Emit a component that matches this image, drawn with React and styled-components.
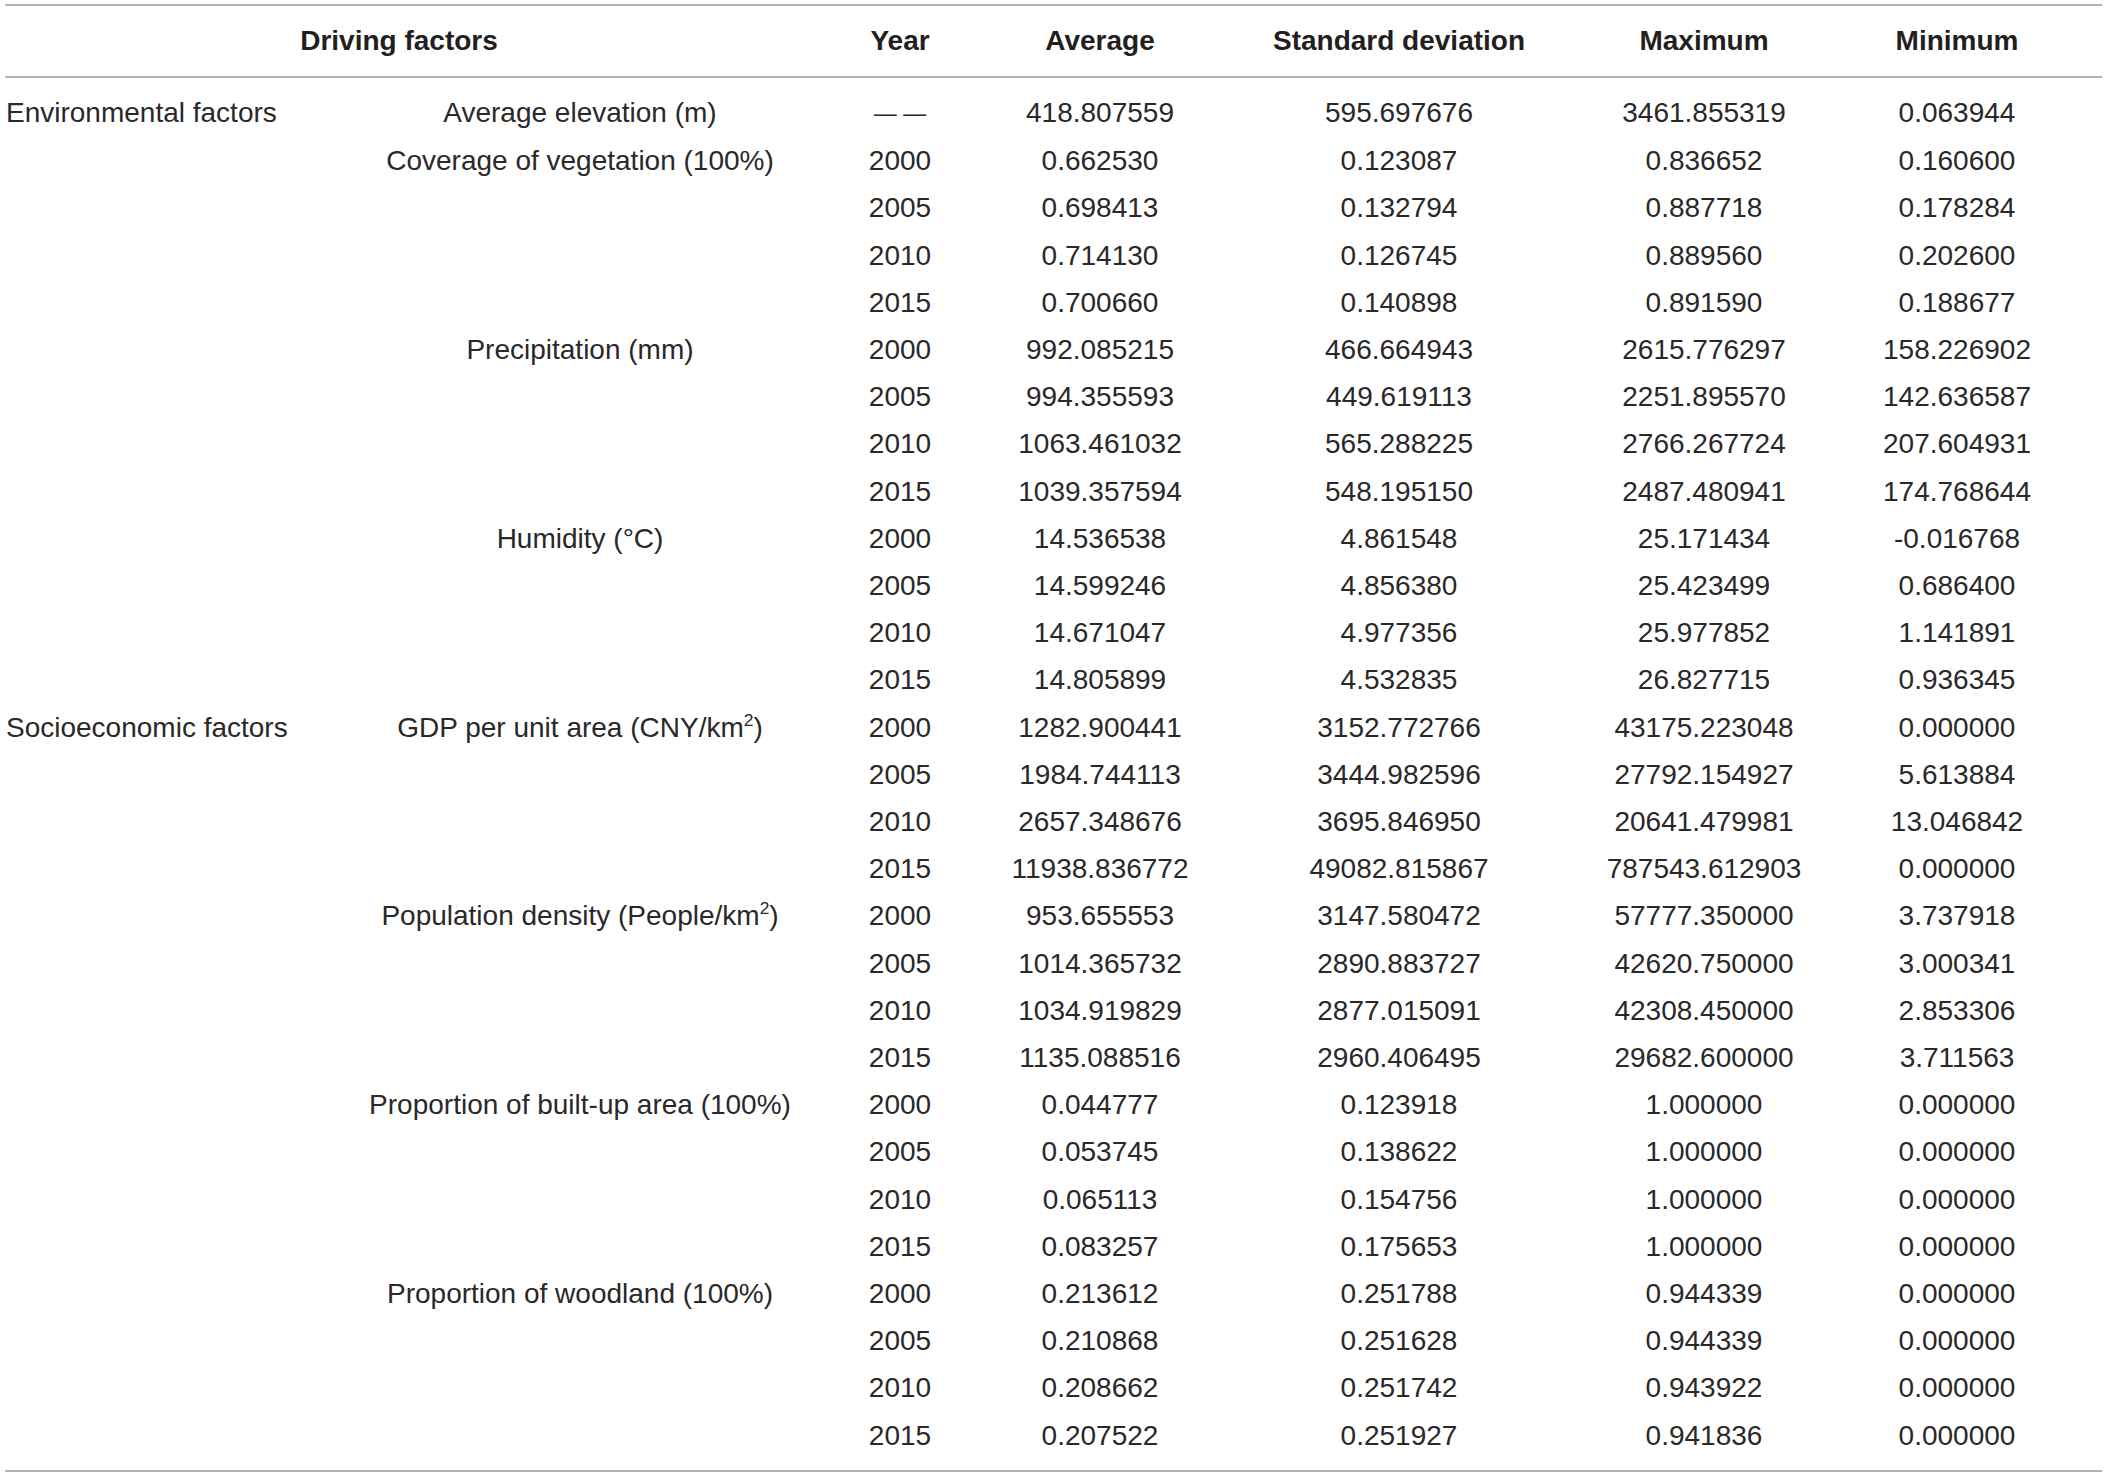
import React from 'react';
import styled, { createGlobalStyle } from 'styled-components';

const GlobalStyle = createGlobalStyle`
  html, body {
    margin: 0;
    padding: 0;
    background: #ffffff;
  }
  body {
    font-family: "Liberation Sans", Arial, Helvetica, sans-serif;
    color: #2a2829;
  }
`;

const Table = styled.table`
  width: 2097px;
  margin: 4px 0 0 5px;
  border-collapse: separate;
  border-spacing: 0;
  table-layout: fixed;
  font-size: 28px;

  /* the minimum column sits a little right of its cell centre */
  th:last-child,
  td:last-child {
    padding-left: 9px;
  }
`;

const Col = styled.col`
  width: ${props => props.$w}px;
`;

const HeadCell = styled.th`
  font-weight: 700;
  line-height: 70px;
  padding: 0;
  text-align: center;
  white-space: nowrap;
  color: #231f20;
  border-top: 2px solid #b4b4b4;
  border-bottom: 2px solid #b4b4b4;
`;

const Row = styled.tr`
  &:first-child td {
    padding-top: 10px;
  }
  &:last-child td {
    padding-bottom: 11px;
    border-bottom: 2px solid #b4b4b4;
  }
`;

const Cell = styled.td`
  padding: 0;
  line-height: 47.2px;
  white-space: nowrap;
  font-weight: 400;
  text-align: ${props => (props.$left ? 'left' : 'center')};
  padding-left: ${props => (props.$left ? '1px' : '0')};
`;

const Sup = styled.sup`
  font-size: 0.62em;
  line-height: 0;
  vertical-align: 0.62em;
`;

const Dash = styled.span`
  font-size: 23px;
`;

const columns = [362, 426, 214, 186, 412, 198, 299];

const data = [
  {
    category: 'Environmental factors',
    factors: [
      {
        name: 'Average elevation (m)',
        rows: [['—', '418.807559', '595.697676', '3461.855319', '0.063944']],
      },
      {
        name: 'Coverage of vegetation (100%)',
        rows: [
          ['2000', '0.662530', '0.123087', '0.836652', '0.160600'],
          ['2005', '0.698413', '0.132794', '0.887718', '0.178284'],
          ['2010', '0.714130', '0.126745', '0.889560', '0.202600'],
          ['2015', '0.700660', '0.140898', '0.891590', '0.188677'],
        ],
      },
      {
        name: 'Precipitation (mm)',
        rows: [
          ['2000', '992.085215', '466.664943', '2615.776297', '158.226902'],
          ['2005', '994.355593', '449.619113', '2251.895570', '142.636587'],
          ['2010', '1063.461032', '565.288225', '2766.267724', '207.604931'],
          ['2015', '1039.357594', '548.195150', '2487.480941', '174.768644'],
        ],
      },
      {
        name: 'Humidity (°C)',
        rows: [
          ['2000', '14.536538', '4.861548', '25.171434', '-0.016768'],
          ['2005', '14.599246', '4.856380', '25.423499', '0.686400'],
          ['2010', '14.671047', '4.977356', '25.977852', '1.141891'],
          ['2015', '14.805899', '4.532835', '26.827715', '0.936345'],
        ],
      },
    ],
  },
  {
    category: 'Socioeconomic factors',
    factors: [
      {
        name: <>GDP per unit area (CNY/km<Sup>2</Sup>)</>,
        rows: [
          ['2000', '1282.900441', '3152.772766', '43175.223048', '0.000000'],
          ['2005', '1984.744113', '3444.982596', '27792.154927', '5.613884'],
          ['2010', '2657.348676', '3695.846950', '20641.479981', '13.046842'],
          ['2015', '11938.836772', '49082.815867', '787543.612903', '0.000000'],
        ],
      },
      {
        name: <>Population density (People/km<Sup>2</Sup>)</>,
        rows: [
          ['2000', '953.655553', '3147.580472', '57777.350000', '3.737918'],
          ['2005', '1014.365732', '2890.883727', '42620.750000', '3.000341'],
          ['2010', '1034.919829', '2877.015091', '42308.450000', '2.853306'],
          ['2015', '1135.088516', '2960.406495', '29682.600000', '3.711563'],
        ],
      },
      {
        name: 'Proportion of built-up area (100%)',
        rows: [
          ['2000', '0.044777', '0.123918', '1.000000', '0.000000'],
          ['2005', '0.053745', '0.138622', '1.000000', '0.000000'],
          ['2010', '0.065113', '0.154756', '1.000000', '0.000000'],
          ['2015', '0.083257', '0.175653', '1.000000', '0.000000'],
        ],
      },
      {
        name: 'Proportion of woodland (100%)',
        rows: [
          ['2000', '0.213612', '0.251788', '0.944339', '0.000000'],
          ['2005', '0.210868', '0.251628', '0.944339', '0.000000'],
          ['2010', '0.208662', '0.251742', '0.943922', '0.000000'],
          ['2015', '0.207522', '0.251927', '0.941836', '0.000000'],
        ],
      },
    ],
  },
];

// flatten groups into table rows, labels only on the first row of each block
const flatRows = [];
data.forEach(group => {
  group.factors.forEach((factor, fi) => {
    factor.rows.forEach((values, ri) => {
      flatRows.push({
        category: fi === 0 && ri === 0 ? group.category : '',
        factor: ri === 0 ? factor.name : '',
        values,
      });
    });
  });
});

const App = () => {
  return (
    <>
      <GlobalStyle />
      <Table>
        <colgroup>
          {columns.map((w, i) => (
            <Col key={i} $w={w} />
          ))}
        </colgroup>
        <thead>
          <tr>
            <HeadCell colSpan={2}>Driving factors</HeadCell>
            <HeadCell>Year</HeadCell>
            <HeadCell>Average</HeadCell>
            <HeadCell>Standard deviation</HeadCell>
            <HeadCell>Maximum</HeadCell>
            <HeadCell>Minimum</HeadCell>
          </tr>
        </thead>
        <tbody>
          {flatRows.map((row, i) => (
            <Row key={i}>
              <Cell $left>{row.category}</Cell>
              <Cell>{row.factor}</Cell>
              {row.values.map((v, j) => (
                <Cell key={j}>{v === '—' ? <Dash>— —</Dash> : v}</Cell>
              ))}
            </Row>
          ))}
        </tbody>
      </Table>
    </>
  );
};

export default App;
